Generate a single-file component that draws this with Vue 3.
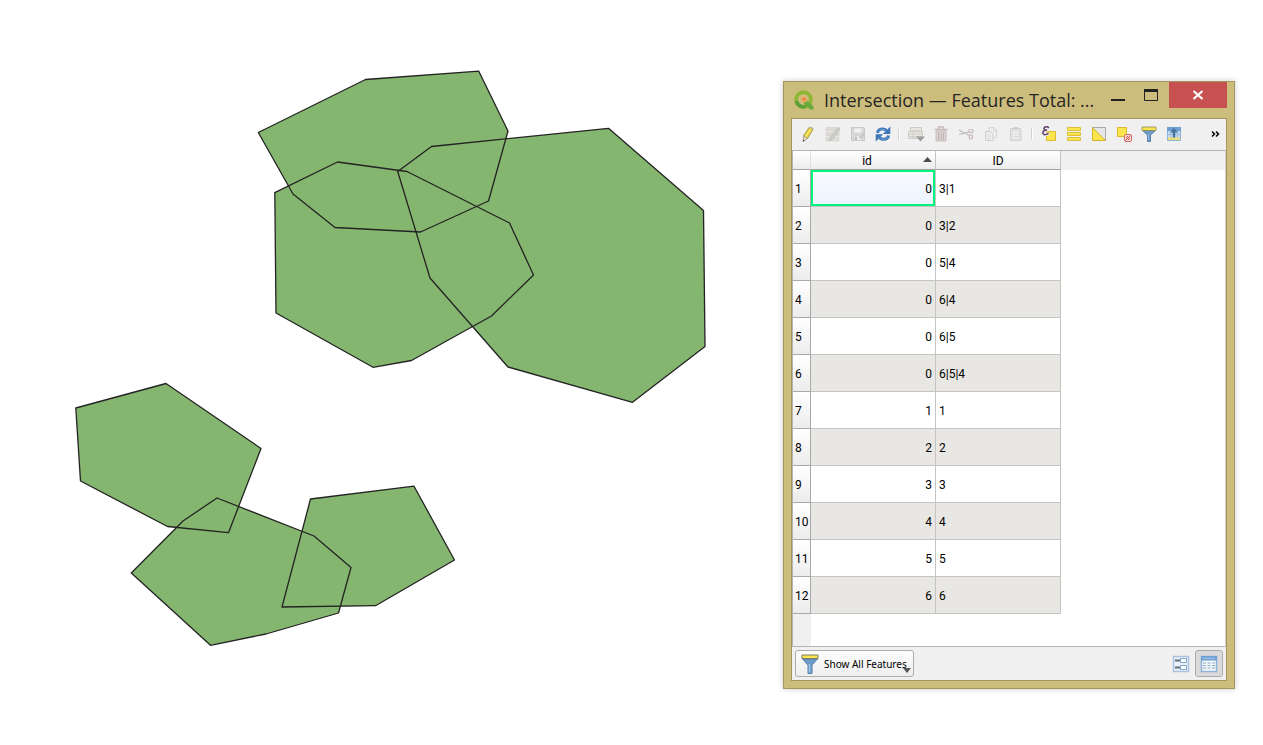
<script setup>
import { ref } from 'vue'

const polygons = [
  '258.3,132.5 365.5,79.5 478.8,71.2 508,131 488.5,201 420.5,232 335,227.5 293,194',
  '274.8,192.7 337.5,162 407,171.5 509.5,223 533.5,275 491.5,316 411.5,360.5 373,367.3 276,313',
  '397.7,171.5 431.5,146.5 608.5,128.3 703.5,210.5 705,346.5 632.5,402.3 508,367 430,278',
  '75.8,408 166,383.5 261,448.5 228.5,532.7 167.5,526.5 80.5,481',
  '131.3,573 183,521 217,498 314,536 351,567.5 338.5,613 266,634 210.5,645.3',
  '310.5,499 414,486.2 454.5,560 375.5,605.7 282,607'
]

const rows = [
  [0, '3|1'], [0, '3|2'], [0, '5|4'], [0, '6|4'], [0, '6|5'], [0, '6|5|4'],
  [1, '1'], [2, '2'], [3, '3'], [4, '4'], [5, '5'], [6, '6']
]

const groups = [
  [
    { id: 'edit', label: 'Toggle editing mode' },
    { id: 'multi', label: 'Toggle multi edit mode', off: true },
    { id: 'save', label: 'Save edits', off: true },
    { id: 'reload', label: 'Reload the table' }
  ],
  [
    { id: 'add', label: 'Add feature', off: true },
    { id: 'delete', label: 'Delete selected features', off: true },
    { id: 'cut', label: 'Cut selected rows', off: true },
    { id: 'copy', label: 'Copy selected rows', off: true },
    { id: 'paste', label: 'Paste features', off: true }
  ],
  [
    { id: 'expr', label: 'Select features using an expression' },
    { id: 'all', label: 'Select all' },
    { id: 'invert', label: 'Invert selection' },
    { id: 'deselect', label: 'Deselect all' },
    { id: 'filter', label: 'Filter features using form' },
    { id: 'top', label: 'Move selection to top' }
  ]
]

const view = ref('table')
</script>

<template>
  <main class="page">
    <svg class="map" viewBox="0 0 783 745" role="img" aria-label="Overlapping polygons">
      <polygon v-for="p in polygons" :key="p" :points="p" class="fill" />
      <polygon v-for="p in polygons" :key="'o' + p" :points="p" class="outline" />
    </svg>

    <section class="window">
      <header class="titlebar">
        <svg class="logo" viewBox="0 0 20 20" aria-hidden="true">
          <circle cx="9.5" cy="9.5" r="7.4" fill="none" stroke="#8fb535" stroke-width="3.8" />
          <path d="M2.300 11a7.400 7.400 0 0 0 9.500 5.500" fill="none" stroke="#5da03a" stroke-width="3.8" />
          <path d="M10 10.500h3.500l6 6V19.500h-3.500L10 14z" fill="#6aab3d" />
          <path d="M7.500 7l4.500 .3 1.200 4.200-3.200 .8-2.500-2z" fill="#f2a65a" />
          <circle cx="10" cy="9.200" r="1.400" fill="#ec7a35" />
        </svg>
        <h1>Intersection — Features Total: ...</h1>
        <button class="min" aria-label="Minimize"><svg viewBox="0 0 16 14"><path d="M1 12h14" stroke="#222" stroke-width="2" /></svg></button>
        <button class="max" aria-label="Maximize"><svg viewBox="0 0 16 14"><path d="M1.500 3v9.500h13V3" fill="none" stroke="#222" /><path d="M1 2.500h14" stroke="#222" stroke-width="3" /></svg></button>
        <button class="close" aria-label="Close"><svg viewBox="0 0 16 14"><path d="M3.500 3l9 8M12.500 3l-9 8" stroke="#fff" stroke-width="2.200" /></svg></button>
      </header>

      <div class="client">
        <div class="toolbar" role="toolbar">
          <div v-for="(g, i) in groups" :key="i" class="group">
            <button v-for="t in g" :key="t.id" class="tool" :aria-label="t.label" :disabled="t.off">
              <svg viewBox="0 0 16 16" aria-hidden="true">
                <template v-if="t.id === 'edit'">
                  <path d="M3.500 10L9 1.500l4 2L7.500 12.500z" fill="#e8cf3e" stroke="#9b8d3c" stroke-width=".8" />
                  <path d="M5.500 11L11 2.500" stroke="#fff17c" stroke-width="1.200" />
                  <path d="M3.500 10l4 2.500L3 15.500z" fill="#eadcc0" stroke="#8a8578" stroke-width=".6" />
                  <path d="M3.300 13.500l1.500 1L3 15.700z" fill="#333" />
                  <path d="M9 1.500l1-1.200 3.700 2L13 3.600z" fill="#b9b9a8" />
                </template>
                <template v-else-if="t.id === 'multi'">
                  <path d="M1 1.500h13v3.500H1zM1 6.500h13V10H1zM1 11.500h13V15H1z" fill="#dddbd4" stroke="#d2d0c9" stroke-width=".6" />
                  <path d="M4.500 15l1-4L13 1.500l2.200 1.500L7.500 13z" fill="#cfcec8" stroke="#b8b8b6" stroke-width=".7" />
                </template>
                <template v-else-if="t.id === 'save'">
                  <path d="M1.500 1.500h12l1 1v12h-13z" fill="#dadada" stroke="#c8c8c8" />
                  <path d="M4 2h8v5H4z" fill="#f1f1f1" stroke="#cacaca" stroke-width=".6" />
                  <path d="M4 10h8v4.500H4z" fill="#eee" stroke="#c2c2c2" stroke-width=".6" />
                  <path d="M5 11h2v3H5z" fill="#bbb" />
                  <path d="M9 12l5-6 1.500 1L11 13z" fill="#c6c6c4" />
                </template>
                <template v-else-if="t.id === 'reload'">
                  <path d="M2.500 7C3 3 8 1.500 11.500 4.500" fill="none" stroke="#3d77b8" stroke-width="3" />
                  <path d="M15.300 .5v7.500H7.800z" fill="#3d77b8" />
                  <path d="M13.500 9.500c-.5 4-5.500 5-9 2.300" fill="none" stroke="#3d77b8" stroke-width="3" />
                  <path d="M.7 15.500V8.200h7.500z" fill="#3d77b8" />
                  <path d="M3 6C4.500 3 8 2.500 10.500 4.500M13 11c-1.500 2.500-5 3-7.500 1.500" fill="none" stroke="#79ace0" stroke-width=".9" />
                </template>
                <template v-else-if="t.id === 'add'">
                  <path d="M2.500 1.500h11V5h-11zM.500 5.500h14v7H.500z" fill="#e6e5e0" stroke="#cccbc6" />
                  <path d="M.500 8h14M.500 10.500h14M5 5.500v7" stroke="#c9c8c3" stroke-width=".8" />
                  <path d="M8 10.500h9L12.500 15.500z" fill="#9d9d9d" />
                </template>
                <template v-else-if="t.id === 'delete'">
                  <path d="M3 5h10V15H3z" fill="#ddd3d3" stroke="#c6bbbb" />
                  <path d="M1.500 3.500h13M5.500 3V1h5v2" fill="none" stroke="#c6baba" stroke-width="1.500" />
                  <path d="M5.500 6.500V14M8 6.500V14M10.500 6.500V14" stroke="#bdb0b0" />
                </template>
                <template v-else-if="t.id === 'cut'">
                  <path d="M1 4l10 5.500M1 8.500l10-2.500" fill="none" stroke="#bcbcbc" stroke-width="1.200" />
                  <ellipse cx="13" cy="5" rx="2.300" ry="1.500" fill="none" stroke="#cbbcbc" stroke-width="1.200" />
                  <ellipse cx="12.800" cy="10.800" rx="1.700" ry="2.200" fill="none" stroke="#cbbcbc" stroke-width="1.200" />
                </template>
                <template v-else-if="t.id === 'copy'">
                  <path d="M6 1.500h5l2.500 2.500v7.500H6z" fill="#eee" stroke="#d6d6d6" />
                  <path d="M2.500 5.500h5L10 8v6.500H2.500z" fill="#eee" stroke="#cfcfcf" />
                  <path d="M4 9h4M4 11h4M4 13h4M10.500 2v3H13" fill="none" stroke="#d4d4d4" stroke-width=".8" />
                </template>
                <template v-else-if="t.id === 'paste'">
                  <path d="M2.500 2.500h10.500v12H2.500z" fill="#e2e2e2" stroke="#d2d2d2" />
                  <path d="M4.500 5H11v8H4.500z" fill="#f1f1f1" stroke="#d6d6d6" stroke-width=".6" />
                  <path d="M5.500 1H10v2.500H5.500z" fill="#cfcfcf" />
                  <path d="M6 8h4M6 10.500h4" stroke="#d4d4d4" />
                </template>
                <template v-else-if="t.id === 'expr'">
                  <path d="M5.500 5.500h9v9h-9z" fill="#fbe54c" stroke="#d9b932" />
                  <path d="M8 2C5.500 .2 2.300 1.200 3 3.200c.3.900 1.500 1.300 3.300 1.200C3 4.500 1.200 6 1.900 7.700c1 2 4.400 1.700 6-.7" fill="none" stroke="#f3edf5" stroke-width="2.600" />
                  <path d="M8 1.800C5.800 0 2.400 1 3 2.900c.3.900 1.500 1.200 3.100 1.200C3.100 4.200 1.200 5.800 1.900 7.400c1 1.900 4.200 1.500 5.600-.4" fill="none" stroke="#5c4368" stroke-width="1.500" />
                </template>
                <template v-else-if="t.id === 'all'">
                  <path d="M1.500 1.500h13v3h-13zM1.500 6.500h13v3h-13zM1.500 11.500h13v3h-13z" fill="#fbe54c" stroke="#dcbf3c" />
                </template>
                <template v-else-if="t.id === 'invert'">
                  <path d="M1.500 1.500h13v13z" fill="#e6e6e6" stroke="#a9a9a9" />
                  <path d="M1.500 1.500v13h13z" fill="#fbe54c" stroke="#d3b42d" />
                </template>
                <template v-else-if="t.id === 'deselect'">
                  <path d="M1.500 1.500h9v9h-9z" fill="#fbe54c" stroke="#d9b932" />
                  <rect x="8.500" y="8.500" width="7" height="7" rx="1.500" fill="#f5dcda" stroke="#dc6a66" />
                  <path d="M9.500 14.500l5-5M10 12l2-2M12 14l2-2" stroke="#d6433f" stroke-width=".9" />
                </template>
                <template v-else-if="t.id === 'filter'">
                  <path d="M1.500 4.500L6.500 9v6.500h3V9l5-4.500z" fill="#6f9bc8" stroke="#5580ad" />
                  <path d="M7.500 8.500v6" stroke="#9dc0e2" />
                  <path d="M1 1h14v3.500H1z" fill="#fbe54c" stroke="#8c8c5e" stroke-width=".8" />
                </template>
                <template v-else>
                  <path d="M1.500 1.500h13v13h-13z" fill="#c5d9ee" stroke="#8fb4da" />
                  <path d="M1 1h14v4H1z" fill="#6d9fd2" />
                  <path d="M1.500 8.500h13M5 5v7M11.500 5v7" stroke="#9dbfe0" />
                  <path d="M2 11.500h12v2.500H2z" fill="#eedf72" />
                  <path d="M6.800 11.500V6.500H4L8 2l4 4.500H9.200v5z" fill="#44759f" />
                </template>
              </svg>
            </button>
          </div>
          <button class="more" aria-label="More tools"><svg viewBox="0 0 9 8"><path d="M1 1.500L3.500 4 1 6.500M5 1.500L7.500 4 5 6.500" fill="none" stroke="#000" stroke-width="1.500" /></svg></button>
        </div>

        <div class="sheet">
          <table>
            <colgroup><col class="c-num"><col class="c-val"><col class="c-val"></colgroup>
            <thead>
              <tr>
                <td class="corner"></td>
                <th scope="col" aria-sort="ascending">id<svg class="sort" viewBox="0 0 9 5" aria-hidden="true"><path d="M0 5L4.500 0 9 5z" fill="#4c4c4c" /></svg></th>
                <th scope="col">ID</th>
              </tr>
            </thead>
            <tbody>
              <tr v-for="(r, i) in rows" :key="i">
                <th scope="row">{{ i + 1 }}</th>
                <td class="num" :class="{ current: i === 0 }">{{ r[0] }}</td>
                <td>{{ r[1] }}</td>
              </tr>
            </tbody>
          </table>
        </div>

        <footer class="statusbar">
          <button class="show">
            <svg class="funnel" viewBox="0 0 18 20" aria-hidden="true">
              <path d="M1.500 5L7 11v8.500h4V11l5.500-6z" fill="#6f9bc8" stroke="#5580ad" />
              <path d="M8.500 10v8.500" stroke="#a3c4e4" stroke-width="1.500" />
              <path d="M1 1h16v3.500H1z" fill="#fbe54c" stroke="#7d7d68" />
            </svg>
            <span>Show All Features</span>
            <svg class="drop" viewBox="0 0 8 5" aria-hidden="true"><path d="M0 0h8L4 5z" fill="#555" /></svg>
          </button>
          <button class="view" :class="{ on: view === 'form' }" aria-label="Form view" @click="view = 'form'">
            <svg viewBox="0 0 18 18">
              <path d="M1.500 1.500h15v15h-15z" fill="#eaf0f6" stroke="#a8c4e0" stroke-width="1.500" />
              <path d="M3 5.500h5M3 12.500h5" stroke="#5d6b7b" stroke-width="2" />
              <path d="M8.500 3.500h6v4h-6zM8.500 10.500h6v4h-6z" fill="#fff" stroke="#82a8d0" />
            </svg>
          </button>
          <button class="view" :class="{ on: view === 'table' }" aria-label="Table view" @click="view = 'table'">
            <svg viewBox="0 0 18 18">
              <path d="M1.500 1.500h15v15h-15z" fill="#f4f7fa" stroke="#8fb4da" stroke-width="1.500" />
              <path d="M1 1h16v4.500H1z" fill="#6d9fd2" />
              <path d="M3 3.300h12" stroke="#a9c9ea" />
              <path d="M3 8h3M7.500 8h3M12 8h3M3 10.500h3M7.500 10.500h3M12 10.500h3M3 13h3M7.500 13h3M12 13h3" stroke="#8dabc9" />
            </svg>
          </button>
        </footer>
      </div>
    </section>
  </main>
</template>

<style>
body {
  margin: 0;
  background: #fff;
}
</style>

<style scoped>
* {
  box-sizing: border-box;
}
.page {
  display: grid;
  grid-template-columns: minmax(0, 1fr) 452px;
  align-items: start;
  padding-right: 28px;
  min-height: 100vh;
  overflow: hidden;
  font-family: "Noto Sans", "Open Sans", sans-serif;
  color: #000;
}
.map {
  display: block;
  width: 100%;
}
.fill {
  fill: #85b670;
}
.outline {
  fill: none;
  stroke: #232323;
  stroke-width: 1.3;
  stroke-linejoin: round;
}
button {
  display: flex;
  align-items: center;
  justify-content: center;
  padding: 0;
  border: 0;
  background: none;
  font: inherit;
  color: inherit;
}
.window {
  margin-top: 81px;
  padding: 0 7px 7px;
  border: 1px solid #a49560;
  background: #cdbd7c;
  box-shadow: 0 0 6px rgba(0, 0, 0, 0.2);
}
.titlebar {
  display: flex;
  align-items: flex-start;
  height: 36px;
}
.logo {
  flex: none;
  width: 20px;
  height: 20px;
  margin: 8px 10px 0 3px;
}
h1 {
  flex: 1;
  margin: 0;
  font: 400 18px/36px "Open Sans", "Noto Sans", sans-serif;
  color: #262626;
  white-space: nowrap;
}
.titlebar button {
  flex: none;
  width: 33px;
  height: 26px;
}
.titlebar button svg {
  width: 16px;
  height: 14px;
}
.titlebar .close {
  width: 58px;
  margin-left: 2px;
  background: #c75050;
}
.client {
  border: 1px solid #a49560;
  background: #f0f0f0;
}
.toolbar {
  display: flex;
  align-items: center;
  height: 31px;
  padding: 0 3px 1px;
}
.group {
  display: flex;
  align-items: center;
}
.group + .group::before {
  content: "";
  height: 12px;
  margin: 0 3px;
  border-left: 1px solid #d2d2d2;
  border-right: 1px solid #fff;
}
.tool {
  width: 25px;
  height: 24px;
}
.tool svg {
  width: 16px;
  height: 16px;
  overflow: visible;
}
.more {
  width: 16px;
  height: 24px;
  margin-left: auto;
}
.more svg {
  width: 9px;
  height: 8px;
}
.sheet {
  height: 497px;
  border: 1px solid #b4b4b4;
  border-right-color: #d0d0d0;
  background: linear-gradient(#f0f0f0, #f0f0f0) 0 0 / 18px 100% no-repeat, linear-gradient(#f0f0f0, #f0f0f0) 0 0 / 100% 19px no-repeat, #fff;
}
table {
  width: 268px;
  table-layout: fixed;
  border-collapse: separate;
  border-spacing: 0;
  font-family: Roboto, "Open Sans", sans-serif;
  font-size: 12px;
  line-height: 16px;
}
.c-num {
  width: 18px;
}
.c-val {
  width: 125px;
}
th,
td {
  padding: 2px 3px 0;
  font-weight: 400;
  text-align: left;
  border-right: 1px solid #c4c4c4;
  border-bottom: 1px solid #c4c4c4;
}
thead th,
thead td {
  position: relative;
  height: 19px;
  text-align: center;
  border-bottom-color: #a2a2a2;
  background: linear-gradient(#fff, #f7f7f7 45%, #ececec);
}
thead th[aria-sort] {
  padding-right: 16px;
  padding-left: 4px;
}
.corner {
  border-right-color: #e0e0e0;
}
.sort {
  position: absolute;
  right: 3px;
  top: 6px;
  width: 9px;
  height: 5px;
}
tbody tr {
  height: 37px;
}
tbody th {
  padding: 2px 0 0 2px;
  border-color: #a8a8a8;
  background: linear-gradient(#fff, #f7f7f7 45%, #ececec);
}
tbody td {
  background: #fff;
}
tbody tr:nth-child(even) td {
  background: #e9e7e3;
}
.num {
  text-align: right;
}
tbody td.current {
  background: linear-gradient(#f8fbff, #ebf3fd);
  box-shadow: inset 0 0 0 2px #00f57e;
}
.statusbar {
  display: flex;
  align-items: center;
  height: 33px;
  padding: 0 3px;
}
.show {
  position: relative;
  gap: 5px;
  width: 119px;
  height: 27px;
  margin-right: auto;
  padding-left: 5px;
  justify-content: flex-start;
  border: 1px solid #adadad;
  border-radius: 3px;
  background: linear-gradient(#fdfdfd, #eee);
  font-size: 10px;
  white-space: nowrap;
}
.funnel {
  flex: none;
  width: 18px;
  height: 20px;
}
.drop {
  position: absolute;
  right: 2px;
  bottom: 3px;
  width: 8px;
  height: 5px;
}
.view {
  width: 28px;
  height: 27px;
  border: 1px solid transparent;
  border-radius: 3px;
}
.view svg {
  width: 18px;
  height: 18px;
}
.view.on {
  border-color: #ababab;
  background: #dadada;
}
</style>
